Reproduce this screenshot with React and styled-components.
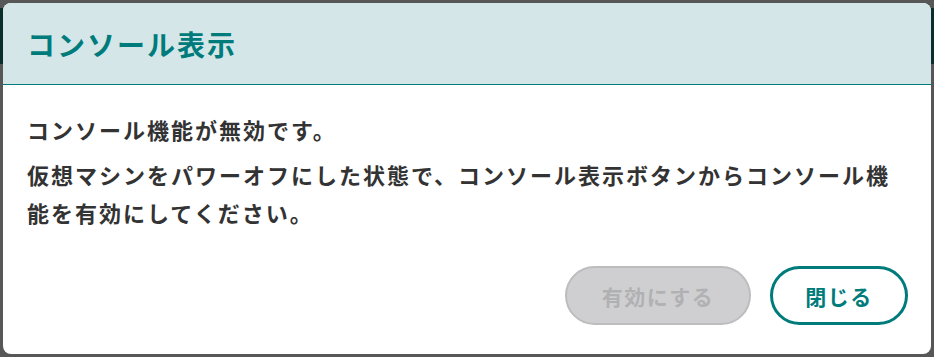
import React from 'react';
import styled, { createGlobalStyle } from 'styled-components';

const GlobalStyle = createGlobalStyle`
  html, body {
    margin: 0;
    padding: 0;
  }
  body {
    font-family: "Noto Sans CJK JP", "Noto Sans", sans-serif;
  }
`;

const Backdrop = styled.div`
  width: 934px;
  height: 357px;
  box-sizing: border-box;
  padding: 3px 3px 0 3px;
  background: linear-gradient(to bottom, #575757 0 8px, #0d2c2c 8px 64px, #575757 64px);
`;

const Dialog = styled.section`
  width: 928px;
  height: 351px;
  background: #ffffff;
  border-radius: 8px;
  overflow: hidden;
  display: flex;
  flex-direction: column;
`;

const Header = styled.header`
  height: 82px;
  box-sizing: border-box;
  background: #d4e6e8;
  border-bottom: 1px solid #007b7b;
  display: flex;
  align-items: center;
  padding: 0 24px;
`;

const Title = styled.h2`
  margin: 0;
  font-size: 28px;
  font-weight: 700;
  letter-spacing: 2px;
  color: #007b7b;
`;

const Body = styled.div`
  padding: 25px 24px 0 24px;
  display: flex;
  flex-direction: column;
  gap: 7px;
`;

const Message = styled.p`
  margin: 0;
  font-size: 22px;
  line-height: 38px;
  font-weight: 700;
  letter-spacing: 2px;
  color: #333333;
`;

const Footer = styled.footer`
  margin-top: auto;
  padding: 0 23px 29px 0;
  display: flex;
  justify-content: flex-end;
  gap: 19px;
`;

const Button = styled.button`
  height: 59px;
  width: ${(p) => p.$width}px;
  box-sizing: border-box;
  border-radius: 30px;
  font-family: inherit;
  font-size: 21px;
  font-weight: 700;
  letter-spacing: 1.5px;
  border: ${(p) => (p.disabled ? '2px solid #bdbdbf' : '3px solid #007b7b')};
  background: ${(p) => (p.disabled ? '#cfcfd1' : '#ffffff')};
  color: ${(p) => (p.disabled ? '#b1b1b3' : '#007b7b')};
  cursor: ${(p) => (p.disabled ? 'default' : 'pointer')};
`;

const App = () => {
  return (
    <>
      <GlobalStyle />
      <Backdrop>
        <Dialog>
          <Header>
            <Title>コンソール表示</Title>
          </Header>
          <Body>
            <Message>コンソール機能が無効です。</Message>
            <Message>
              仮想マシンをパワーオフにした状態で、コンソール表示ボタンからコンソール機能を有効にしてください。
            </Message>
          </Body>
          <Footer>
            <Button $width={186} disabled>有効にする</Button>
            <Button $width={138}>閉じる</Button>
          </Footer>
        </Dialog>
      </Backdrop>
    </>
  );
};

export default App;
